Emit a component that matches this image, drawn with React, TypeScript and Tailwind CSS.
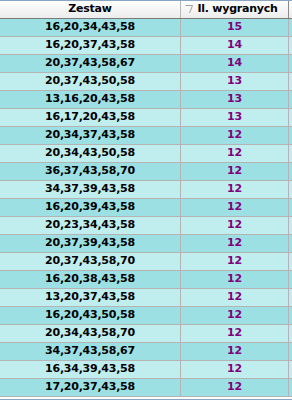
import React from 'react'

const ROWS: [string, number][] = [
  ['16,20,34,43,58', 15],
  ['16,20,37,43,58', 14],
  ['20,37,43,58,67', 14],
  ['20,37,43,50,58', 13],
  ['13,16,20,43,58', 13],
  ['16,17,20,43,58', 13],
  ['20,34,37,43,58', 12],
  ['20,34,43,50,58', 12],
  ['36,37,43,58,70', 12],
  ['34,37,39,43,58', 12],
  ['16,20,39,43,58', 12],
  ['20,23,34,43,58', 12],
  ['20,37,39,43,58', 12],
  ['20,37,43,58,70', 12],
  ['16,20,38,43,58', 12],
  ['13,20,37,43,58', 12],
  ['16,20,43,50,58', 12],
  ['20,34,43,58,70', 12],
  ['34,37,43,58,67', 12],
  ['16,34,39,43,58', 12],
  ['17,20,37,43,58', 12],
]

export default function App() {
  return (
    <div className="w-[292px] h-[400px] bg-white border-t border-b border-[#8ba4c1] overflow-hidden font-['DejaVu_Sans',sans-serif] text-[11px] tracking-[-0.25px] font-bold text-black">
      <div className="flex h-[18px] bg-gradient-to-b from-white to-[#ececec] border-b border-[#7a7a7a]">
        <div className="w-[181px] flex items-center justify-center border-r border-[#b8b8b8]">Zestaw</div>
        <div className="w-[108px] relative flex items-center justify-center pl-[6px] border-r border-[#8a8a8a]">
          <svg className="absolute left-[4px] top-[4px]" width="8" height="9" viewBox="0 0 8 9">
            <path d="M0.5 0.5 L7.5 0.5 L4.5 8" fill="none" stroke="#a0a0a0" strokeWidth="1" />
          </svg>
          Il. wygranych
        </div>
      </div>
      {ROWS.map(([set, n], i) => (
        <div key={i} className={`flex h-[18px] border-b border-[#b4b4b4] ${i % 2 === 0 ? 'bg-[#9de0e3]' : 'bg-[#c0eded]'}`}>
          <div className="w-[181px] flex items-center justify-center border-r border-[#b4b4b4]">{set}</div>
          <div className="w-[108px] flex items-center justify-center border-r border-[#b4b4b4] text-[#800080]">{n}</div>
        </div>
      ))}
    </div>
  )
}
